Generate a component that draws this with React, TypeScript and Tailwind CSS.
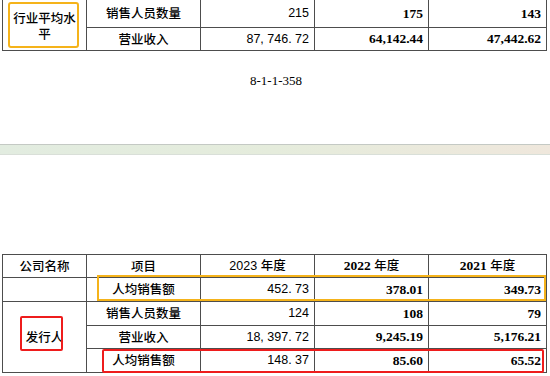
const cjk = "font-['Noto_Sans_CJK_SC',sans-serif] font-medium";
const sansNum = "font-['Liberation_Sans','Noto_Sans_CJK_SC',sans-serif]";
const serifNum = "font-['Liberation_Serif','Noto_Sans_CJK_SC',serif] font-bold";

const td = "border border-[#4d4d4d] p-0";

const Cols = () => (
  <colgroup>
    <col className="w-[84px]" />
    <col className="w-[114px]" />
    <col className="w-[114px]" />
    <col className="w-[114px]" />
    <col className="w-[118px]" />
  </colgroup>
);

type Row = { item: string; a: string; b: string; c: string };

const ValueCells = ({ r }: { r: Row }) => (
  <>
    <td className={`${td} leading-none text-center text-[12.5px] ${cjk}`}>{r.item}</td>
    <td className={`${td} leading-none text-right pr-[5px] text-[12.5px] ${sansNum}`}>{r.a}</td>
    <td className={`${td} leading-none text-right pr-[5px] text-[13.5px] ${serifNum}`}>{r.b}</td>
    <td className={`${td} leading-none text-right pr-[5px] text-[13.5px] ${serifNum}`}>{r.c}</td>
  </>
);

export default function App() {
  const issuer: Row[] = [
    { item: "销售人员数量", a: "124", b: "108", c: "79" },
    { item: "营业收入", a: "18, 397. 72", b: "9,245.19", c: "5,176.21" },
    { item: "人均销售额", a: "148. 37", b: "85.60", c: "65.52" },
  ];

  return (
    <div className="w-[550px] h-[376px] overflow-hidden bg-white text-black">
      {/* top of previous page */}
      <div className="relative pl-[2px] -mt-[1px]">
        <table className="table-fixed border-collapse w-[544px]">
          <Cols />
          <tbody>
            <tr className="h-[28px]">
              <td rowSpan={2} className={`${td} text-center text-[12.5px] ${cjk} leading-[16px] px-[10px] pt-[2px]`}>
                行业平均水平
              </td>
              <ValueCells r={{ item: "销售人员数量", a: "215", b: "175", c: "143" }} />
            </tr>
            <tr className="h-[23px]">
              <ValueCells r={{ item: "营业收入", a: "87, 746. 72", b: "64,142.44", c: "47,442.62" }} />
            </tr>
          </tbody>
        </table>
        <div className="absolute left-[8px] top-[3px] w-[71px] h-[46px] border-2 border-[#f5b31a] rounded-[3px]" />
      </div>

      <div className="mt-[22px] h-[16px] text-center text-[13px] leading-[16px] font-['Liberation_Serif',serif] pl-[2px]">
        8-1-1-358
      </div>

      <div className="mt-[55px] h-[11px] border-t border-[#c4c9c4] border-b border-b-[#d9dfd8] bg-gradient-to-r from-[#e2ece0] via-[#e5ecdc] to-[#efe7dc]" />

      <div className="relative pl-[2px] mt-[99px]">
        <table className="table-fixed border-collapse w-[544px]">
          <Cols />
          <tbody>
            <tr className="h-[23px]">
              <td className={`${td} leading-none text-center text-[12.5px] ${cjk}`}>公司名称</td>
              <td className={`${td} leading-none text-center text-[12.5px] ${cjk}`}>项目</td>
              <td className={`${td} leading-none text-center text-[12.5px] ${sansNum}`}>
                2023 <span className={cjk}>年度</span>
              </td>
              <td className={`${td} leading-none text-center text-[13.5px] ${serifNum}`}>
                2022 <span className={`${cjk} text-[12.5px]`}>年度</span>
              </td>
              <td className={`${td} leading-none text-center text-[13.5px] ${serifNum}`}>
                2021 <span className={`${cjk} text-[12.5px]`}>年度</span>
              </td>
            </tr>
            <tr className="h-[24px]">
              <td className={td}></td>
              <ValueCells r={{ item: "人均销售额", a: "452. 73", b: "378.01", c: "349.73" }} />
            </tr>
            {issuer.map((r, i) => (
              <tr key={r.item} className={i === 1 ? "h-[23px]" : "h-[24px]"}>
                {i === 0 && (
                  <td rowSpan={3} className={`${td} leading-none text-center text-[12.5px] ${cjk}`}>
                    发行人
                  </td>
                )}
                <ValueCells r={r} />
              </tr>
            ))}
          </tbody>
        </table>
        <div className="absolute left-[97px] top-[21px] w-[449px] h-[26px] border-2 border-[#f5b31a]" />
        <div className="absolute left-[20px] top-[62px] w-[43px] h-[35px] border-2 border-[#ee1c1c] rounded-[2px]" />
        <div className="absolute left-[102px] top-[95px] w-[442px] h-[24px] border-2 border-[#ee1c1c] rounded-[2px]" />
      </div>
    </div>
  );
}
